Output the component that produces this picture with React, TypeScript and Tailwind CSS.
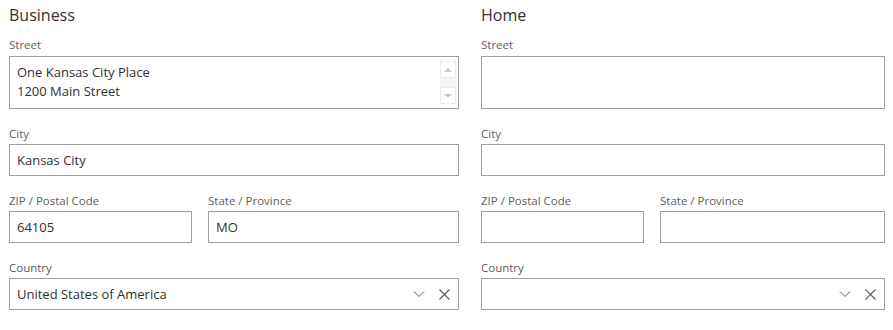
import React from "react";

const font = { fontFamily: '"Open Sans", "Noto Sans", sans-serif' };

function Label({ children }: { children: React.ReactNode }) {
  return <div className="h-[19px] pt-[1px] text-[11.5px] leading-[16px] text-[#605e5c]">{children}</div>;
}

function Input({ value, className = "" }: { value?: string; className?: string }) {
  return (
    <div className={"h-[32px] border border-[#a19f9d] flex items-center pt-[1px] px-[7px] text-[13px] text-[#323130] " + className}>
      {value}
    </div>
  );
}

function ScrollBar() {
  return (
    <div className="w-[16px] self-stretch my-[4px] mr-[2px] bg-[#f3f3f3] flex flex-col justify-between">
      <div className="h-[17px] bg-white border border-[#eaeaea] flex items-center justify-center">
        <div className="w-0 h-0 border-l-[4px] border-r-[4px] border-b-[4px] border-l-transparent border-r-transparent border-b-[#c8c8c8]" />
      </div>
      <div className="h-[17px] bg-white border border-[#eaeaea] flex items-center justify-center">
        <div className="w-0 h-0 border-l-[4px] border-r-[4px] border-t-[4px] border-l-transparent border-r-transparent border-t-[#c8c8c8]" />
      </div>
    </div>
  );
}

function Chevron() {
  return (
    <svg width="12" height="8" viewBox="0 0 12 8" fill="none">
      <path d="M1 1.5 L6 6.5 L11 1.5" stroke="#605e5c" strokeWidth="1" />
    </svg>
  );
}

function Cross() {
  return (
    <svg width="11" height="11" viewBox="0 0 11 11" fill="none">
      <path d="M0.5 0.5 L10.5 10.5 M10.5 0.5 L0.5 10.5" stroke="#605e5c" strokeWidth="1.1" />
    </svg>
  );
}

function Column({
  title,
  width,
  zipWidth,
  street,
  city,
  zip,
  state,
  country,
}: {
  title: string;
  width: string;
  zipWidth: string;
  street?: string[];
  city?: string;
  zip?: string;
  state?: string;
  country?: string;
}) {
  return (
    <div className={"flex flex-col " + width}>
      <div className="h-[36px] pt-[3px] text-[16px] leading-[24px] text-[#323130]">{title}</div>
      <Label>Street</Label>
      <div className="mt-[1px] h-[53px] border border-[#a19f9d] flex text-[13px] text-[#323130]">
        <div className="flex-1 pl-[7px] pt-[6px] leading-[19px]">
          {street?.map((l) => (
            <div key={l}>{l}</div>
          ))}
        </div>
        {street && <ScrollBar />}
      </div>
      <div className="mt-[16px]">
        <Label>City</Label>
        <Input value={city} />
      </div>
      <div className="mt-[16px] flex gap-[16px]">
        <div className={zipWidth}>
          <Label>ZIP / Postal Code</Label>
          <Input value={zip} />
        </div>
        <div className="flex-1">
          <Label>State / Province</Label>
          <Input value={state} />
        </div>
      </div>
      <div className="mt-[16px]">
        <Label>Country</Label>
        <div className="h-[32px] border border-[#a19f9d] flex items-center pl-[7px] text-[13px] text-[#323130]">
          <div className="flex-1 pt-[1px]">{country}</div>
          <div className="w-[26px] flex justify-center">
            <Chevron />
          </div>
          <div className="w-[24px] mr-[2px] flex justify-center">
            <Cross />
          </div>
        </div>
      </div>
    </div>
  );
}

export default function App() {
  return (
    <div className="w-[893px] h-[330px] bg-white flex pl-[9px] gap-[22px]" style={font}>
      <Column
        title="Business"
        width="w-[450px]"
        zipWidth="w-[183px]"
        street={["One Kansas City Place", "1200 Main Street"]}
        city="Kansas City"
        zip="64105"
        state="MO"
        country="United States of America"
      />
      <Column title="Home" width="w-[404px]" zipWidth="w-[163px]" />
    </div>
  );
}
